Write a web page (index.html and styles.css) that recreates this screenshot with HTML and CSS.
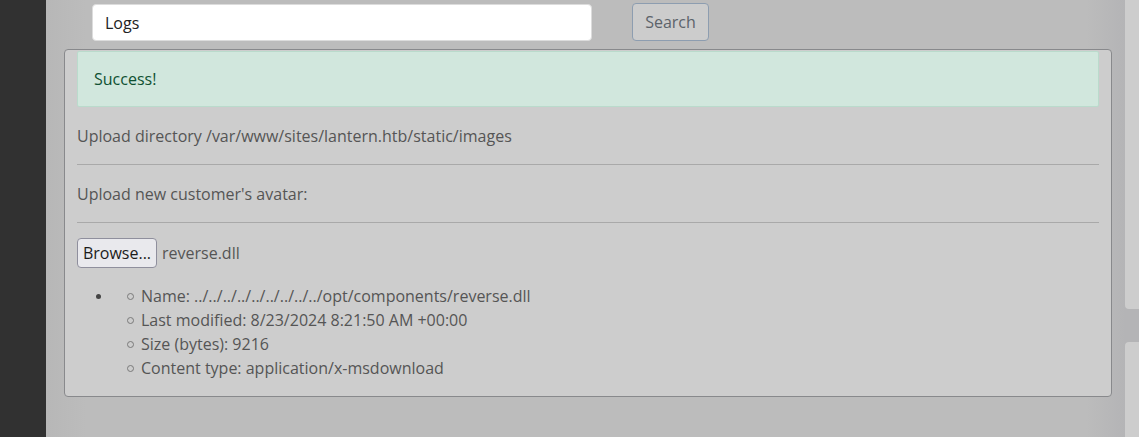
FILE: index.html
```html
<!DOCTYPE html>
<html>
<head>
<meta charset="utf-8">
<link rel="stylesheet" href="styles.css">
</head>
<body>
<div class="page">
  <aside class="sidebar"></aside>
  <main class="main">
    <div class="search-row">
      <input class="search-input" type="text" value="Logs">
      <button class="search-btn">Search</button>
    </div>
    <section class="panel">
      <div class="alert">Success!</div>
      <p class="line">Upload directory /var/www/sites/lantern.htb/static/images</p>
      <hr class="rule">
      <p class="line">Upload new customer's avatar:</p>
      <hr class="rule">
      <div class="file-row">
        <span class="browse">Browse...</span>
        <span class="file-name">reverse.dll</span>
      </div>
      <ul class="outer">
        <li class="outer-item">
          <ul class="inner">
            <li>Name: ../../../../../../../../../opt/components/reverse.dll</li>
            <li>Last modified: 8/23/2024 8:21:50 AM +00:00</li>
            <li>Size (bytes): 9216</li>
            <li>Content type: application/x-msdownload</li>
          </ul>
        </li>
      </ul>
    </section>
  </main>
  <div class="edge">
    <div class="edge-card top"></div>
    <div class="edge-card bottom"></div>
  </div>
</div>
</body>
</html>
```

FILE: styles.css
```css
html, body {
  margin: 0;
  padding: 0;
  height: 100%;
  overflow: hidden;
}
body {
  font-family: "Open Sans", "Liberation Sans", sans-serif;
  font-size: 16px;
  line-height: 24px;
  color: #555555;
  background: #bcbcbc;
}
.page {
  display: flex;
  height: 437px;
}
.sidebar {
  width: 46px;
  flex: none;
  background: #313131;
}
.main {
  flex: 1;
  background: linear-gradient(to right, #b7b7b7 0, #bcbcbc 40px, #bcbcbc 1040px, #b4b4b6 100%);
  padding: 3px 13px 0 18px;
  box-sizing: border-box;
}
.search-row {
  display: flex;
  align-items: flex-start;
  padding-left: 28px;
  height: 46px;
}
.search-input {
  box-sizing: border-box;
  width: 500px;
  height: 37px;
  margin-top: 1px;
  border: 1px solid #dcdcdc;
  border-radius: 4px;
  background: #ffffff;
  font-family: inherit;
  font-size: 16px;
  color: #222222;
  padding: 0 12px;
  outline: none;
}
.search-btn {
  box-sizing: border-box;
  margin-left: 40px;
  width: 77px;
  height: 38px;
  border: 1px solid #8d9db0;
  border-radius: 4px;
  background: #cccccc;
  font-family: inherit;
  font-size: 16px;
  color: #5c636a;
  padding: 0;
}
.panel {
  background: #cdcdcd;
  border: 1px solid #88898c;
  border-radius: 4px;
  padding: 1px 12px 16px 12px;
  height: 348px;
  box-sizing: border-box;
}
.alert {
  background: #d1e7dd;
  border: 1px solid #badbcc;
  border-radius: 2px;
  color: #0f5132;
  padding: 15px 16px;
  height: 56px;
  box-sizing: border-box;
  line-height: 24px;
}
.line {
  margin: 0;
  padding: 17px 0 16px;
}
.rule {
  margin: 0;
  border: 0;
  border-top: 1px solid #a9a9a9;
  height: 0;
}
.file-row {
  display: flex;
  align-items: center;
  margin-top: 15px;
  height: 30px;
}
.browse {
  box-sizing: border-box;
  height: 30px;
  width: 80px;
  display: flex;
  align-items: center;
  justify-content: center;
  background: #e9e9ed;
  border: 1px solid #8f8f9d;
  border-radius: 4px;
  color: #1b1b1b;
}
.file-name {
  margin-left: 5px;
}
.outer {
  margin: 16px 0 0;
  padding-left: 19px;
  list-style: none;
}
.outer-item {
  display: flex;
  align-items: flex-start;
}
.outer-item::before {
  content: "";
  flex: none;
  width: 5px;
  height: 5px;
  margin-top: 10px;
  border-radius: 50%;
  background: #444444;
}
.inner {
  margin: 0;
  padding-left: 40px;
  list-style: none;
}
.inner > li::before {
  content: "";
  display: inline-block;
  box-sizing: border-box;
  width: 7px;
  height: 7px;
  margin-left: -14px;
  margin-right: 7px;
  vertical-align: 2px;
  border: 1px solid #7a7a7a;
  border-radius: 50%;
}
.edge {
  width: 14px;
  flex: none;
  display: flex;
  flex-direction: column;
  background: #b4b4b6;
}
.edge-card {
  background: #cdcdcd;
}
.edge-card.top {
  height: 309px;
  border-radius: 0 0 0 4px;
}
.edge-card.bottom {
  margin-top: 33px;
  flex: 1;
  border-radius: 4px 0 0 0;
}
```
